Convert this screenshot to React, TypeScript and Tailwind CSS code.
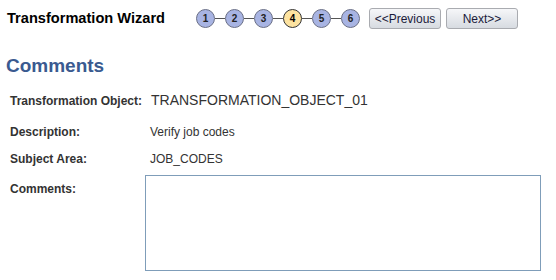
const steps = [1, 2, 3, 4, 5, 6];

function StepDot({ n, active }: { n: number; active: boolean }) {
  return (
    <div
      className={
        active
          ? "flex h-[19px] w-[19px] items-center justify-center rounded-full border border-[#333] bg-[#fde3a0] text-[10px] font-bold text-black"
          : "flex h-[19px] w-[19px] items-center justify-center rounded-full border border-[#6a6f86] bg-[#a8b4e3] text-[10px] font-bold text-[#222]"
      }
    >
      {n}
    </div>
  );
}

function NavButton({ label }: { label: string }) {
  return (
    <button className="h-[21px] w-[72px] rounded-[3px] border border-[#a9abb0] bg-gradient-to-b from-[#f6f7f9] to-[#d7dbe1] text-[12px] text-[#1a1a3a]">
      {label}
    </button>
  );
}

function Row({ label, children, className }: { label: string; children: React.ReactNode; className?: string }) {
  return (
    <div className={"flex h-[20px] items-center " + (className ?? "")}>
      <div className="w-[151px] shrink-0 whitespace-nowrap pl-[10px] text-[12px] font-bold text-[#333]">{label}</div>
      {children}
    </div>
  );
}

export default function App() {
  return (
    <div className="h-[280px] w-[556px] overflow-hidden bg-white font-['Liberation_Sans',Arial,sans-serif]">
      {/* Header */}
      <div className="flex items-center pt-[8px]">
        <h1 className="ml-[7px] w-[189px] whitespace-nowrap text-[14.6px] font-bold text-black">Transformation Wizard</h1>
        <div className="flex items-center">
          {steps.map((n, i) => (
            <div key={n} className="flex items-center">
              {i > 0 && <div className="h-px w-[10px] bg-[#555]" />}
              <StepDot n={n} active={n === 4} />
            </div>
          ))}
        </div>
        <div className="ml-[9px] flex gap-[5px]">
          <NavButton label="<<Previous" />
          <NavButton label="Next>>" />
        </div>
      </div>

      {/* Section heading */}
      <h2 className="ml-[6px] mt-[24px] text-[19px] font-bold leading-[24px] text-[#3a5a90]">Comments</h2>

      <Row label="Transformation Object:" className="mt-[13px]">
        <div className="text-[14px] text-[#333]">TRANSFORMATION_OBJECT_01</div>
      </Row>
      <Row label="Description:" className="mt-[11px]">
        <div className="-ml-px text-[12px] text-[#333]">Verify job codes</div>
      </Row>
      <Row label="Subject Area:" className="mt-[7px]">
        <div className="-ml-px text-[12px] text-[#333]">JOB_CODES</div>
      </Row>
      <div className="mt-[6px] flex">
        <div className="w-[145px] shrink-0 pl-[10px] pt-[5px] text-[12px] font-bold text-[#333]">Comments:</div>
        <textarea className="block h-[96px] w-[396px] resize-none border border-[#7f9db9] bg-white" />
      </div>
    </div>
  );
}
